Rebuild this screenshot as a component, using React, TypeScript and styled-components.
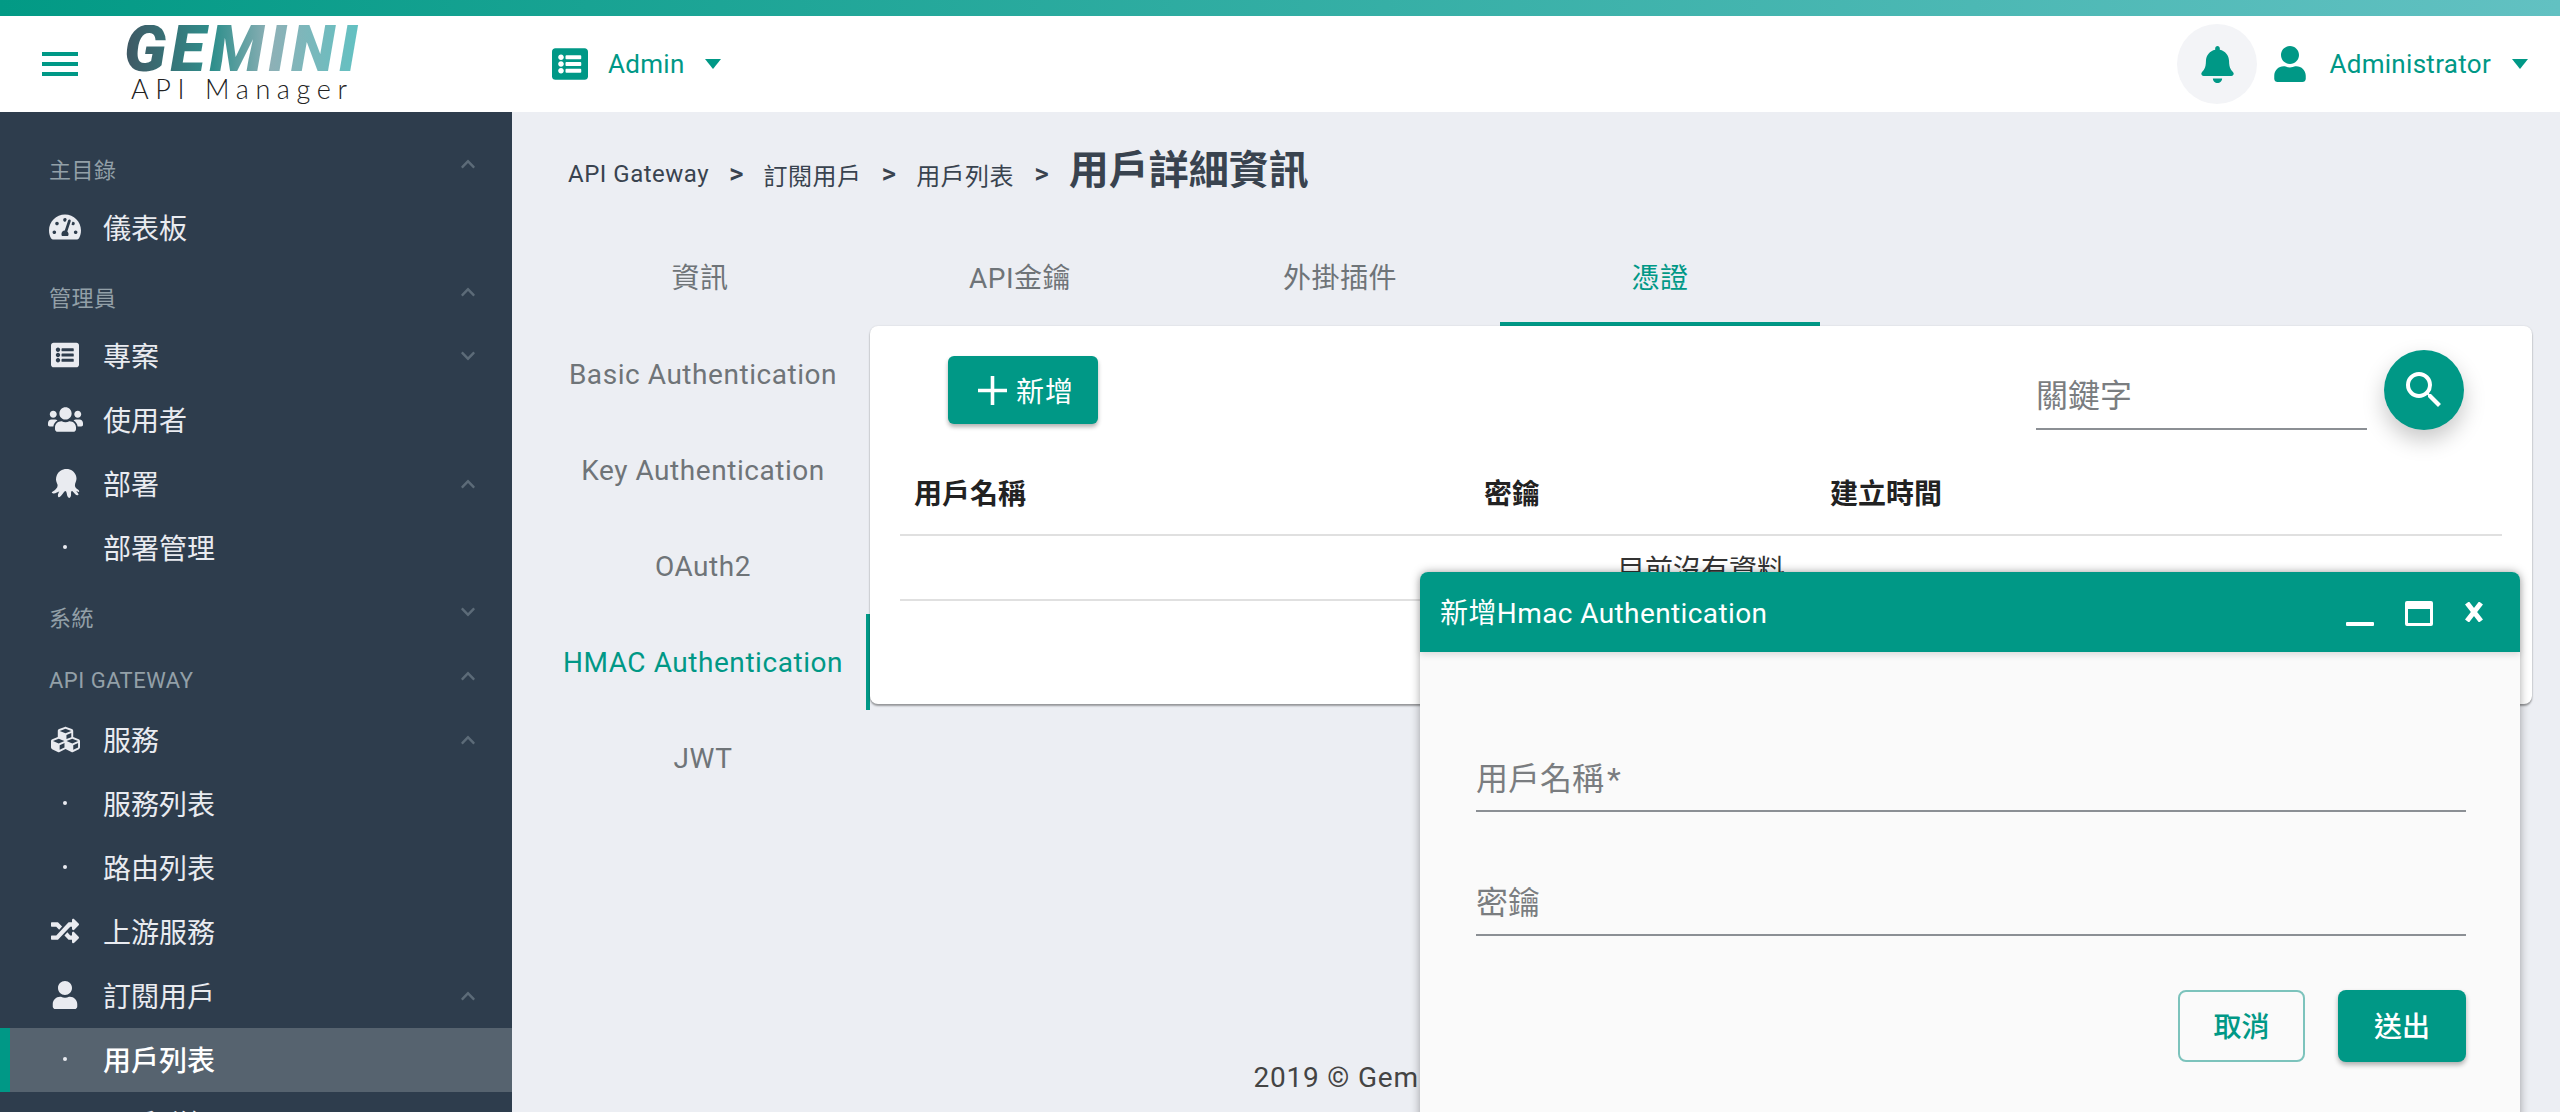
import styled, { createGlobalStyle } from 'styled-components'
import { FaBell, FaChevronDown, FaChevronUp, FaCubes, FaListAlt, FaOctopusDeploy, FaRandom, FaTachometerAlt, FaUser, FaUsers } from 'react-icons/fa'
import { MdSearch } from 'react-icons/md'
import type { ReactNode } from 'react'

const teal = '#009886'

type NavEntry = {
   label: string
   kind: 'section' | 'item' | 'sub'
   icon?: ReactNode
   chevron?: 'up' | 'down'
   active?: boolean
}

const navEntries: NavEntry[] = [
   { label: '主目錄', kind: 'section', chevron: 'up' },
   { label: '儀表板', kind: 'item', icon: <FaTachometerAlt size={32} /> },
   { label: '管理員', kind: 'section', chevron: 'up' },
   { label: '專案', kind: 'item', icon: <FaListAlt size={28} />, chevron: 'down' },
   { label: '使用者', kind: 'item', icon: <FaUsers size={35} /> },
   { label: '部署', kind: 'item', icon: <FaOctopusDeploy size={29} />, chevron: 'up' },
   { label: '部署管理', kind: 'sub' },
   { label: '系統', kind: 'section', chevron: 'down' },
   { label: 'API GATEWAY', kind: 'section', chevron: 'up' },
   { label: '服務', kind: 'item', icon: <FaCubes size={29} />, chevron: 'up' },
   { label: '服務列表', kind: 'sub' },
   { label: '路由列表', kind: 'sub' },
   { label: '上游服務', kind: 'item', icon: <FaRandom size={28} /> },
   { label: '訂閱用戶', kind: 'item', icon: <FaUser size={28} />, chevron: 'up' },
   { label: '用戶列表', kind: 'sub', active: true },
   { label: '用戶群組', kind: 'sub' },
]

const topTabs = ['資訊', 'API金鑰', '外掛插件', '憑證']
const authTabs = ['Basic Authentication', 'Key Authentication', 'OAuth2', 'HMAC Authentication', 'JWT']

export default function App() {
   return (
      <Shell>
         <GlobalStyle />
         <TopStrip />
         <Header>
            <Hamburger>
               <span />
               <span />
               <span />
            </Hamburger>
            <Logo>
               <LogoMain>GEMINI</LogoMain>
               <LogoSub>API Manager</LogoSub>
            </Logo>
            <ProjectMenu>
               <FaListAlt size={36} />
               <MenuLabel>Admin</MenuLabel>
               <Caret />
            </ProjectMenu>
            <HeaderRight>
               <BellButton>
                  <FaBell size={37} />
               </BellButton>
               <FaUser size={36} />
               <MenuLabel>Administrator</MenuLabel>
               <Caret />
            </HeaderRight>
         </Header>
         <Body>
            <Sidebar>
               {navEntries.map((entry) => (
                  <NavRow key={entry.label} $kind={entry.kind} $active={entry.active}>
                     {entry.kind !== 'section' && (
                        <NavIcon>{entry.kind === 'sub' ? <NavDot /> : entry.icon}</NavIcon>
                     )}
                     <NavLabel $kind={entry.kind} $active={entry.active}>{entry.label}</NavLabel>
                     {entry.chevron && (
                        <NavChevron>
                           {entry.chevron === 'up' ? <FaChevronUp size={16} /> : <FaChevronDown size={16} />}
                        </NavChevron>
                     )}
                  </NavRow>
               ))}
            </Sidebar>
            <Main>
               <Breadcrumb>
                  <Crumb>API Gateway</Crumb>
                  <CrumbArrow>&gt;</CrumbArrow>
                  <Crumb>訂閱用戶</Crumb>
                  <CrumbArrow>&gt;</CrumbArrow>
                  <Crumb>用戶列表</Crumb>
                  <CrumbArrow>&gt;</CrumbArrow>
                  <PageTitle>用戶詳細資訊</PageTitle>
               </Breadcrumb>
               <TopTabs>
                  {topTabs.map((tab) => (
                     <TopTab key={tab} $active={tab === '憑證'}>{tab}</TopTab>
                  ))}
               </TopTabs>
               <Content>
                  <AuthTabs>
                     {authTabs.map((tab) => (
                        <AuthTab key={tab} $active={tab === 'HMAC Authentication'}>{tab}</AuthTab>
                     ))}
                  </AuthTabs>
                  <Card>
                     <Toolbar>
                        <AddButton>
                           <svg width="29" height="29" viewBox="0 0 29 29">
                              <path d="M14.5 0v29M0 14.5h29" stroke="#fff" strokeWidth="3.6" fill="none" />
                           </svg>
                           新增
                        </AddButton>
                        <SearchInput placeholder="關鍵字" />
                        <SearchButton>
                           <MdSearch size={48} />
                        </SearchButton>
                     </Toolbar>
                     <DataTable>
                        <thead>
                           <tr>
                              <HeadCell $width={570}>用戶名稱</HeadCell>
                              <HeadCell $width={346}>密鑰</HeadCell>
                              <HeadCell>建立時間</HeadCell>
                           </tr>
                        </thead>
                        <tbody>
                           <tr>
                              <EmptyCell colSpan={3}>目前沒有資料</EmptyCell>
                           </tr>
                        </tbody>
                     </DataTable>
                  </Card>
               </Content>
               <Footer>2019 © Gemini Open Cloud Computing Inc.</Footer>
            </Main>
         </Body>
         <Dialog>
            <DialogHeader>
               <DialogTitle>新增Hmac Authentication</DialogTitle>
               <WindowIcon width="28" height="28" viewBox="0 0 28 28">
                  <rect x="0" y="24" width="28" height="4" rx="1" fill="#fff" />
               </WindowIcon>
               <WindowIcon width="28" height="28" viewBox="0 0 28 28">
                  <path fillRule="evenodd" d="M2 3h24a2 2 0 0 1 2 2v21a2 2 0 0 1-2 2H2a2 2 0 0 1-2-2V5a2 2 0 0 1 2-2zm1 8v14h22V11z" fill="#fff" />
               </WindowIcon>
               <WindowIcon width="20" height="20" viewBox="0 0 20 20">
                  <path d="M3 1l14 18M17 1L3 19" stroke="#fff" strokeWidth="5" fill="none" />
               </WindowIcon>
            </DialogHeader>
            <DialogBody>
               <FormInput placeholder="用戶名稱 *" />
               <FormInput placeholder="密鑰" />
               <DialogActions>
                  <CancelButton>取消</CancelButton>
                  <SubmitButton>送出</SubmitButton>
               </DialogActions>
            </DialogBody>
         </Dialog>
      </Shell>
   )
}

const GlobalStyle = createGlobalStyle`
html, body {
   margin: 0;
   padding: 0;
   height: 100%;
   overflow: hidden;
}
body, input, button {
   font-family: Roboto, "Noto Sans CJK TC", sans-serif;
}
* {
   box-sizing: border-box;
}
`

const Shell = styled.div`
position: relative;
display: flex;
flex-direction: column;
height: 1112px;
overflow: hidden;
background: #eceef3;
`

const TopStrip = styled.div`
height: 16px;
flex: none;
background: linear-gradient(90deg, #029a85, #62c1c2);
`

const Header = styled.header`
height: 96px;
flex: none;
display: flex;
align-items: center;
padding: 0 32px 0 42px;
background: #fff;
color: ${teal};
`

const Hamburger = styled.div`
width: 36px;
display: flex;
flex-direction: column;
gap: 6px;
span {
   height: 4px;
   background: ${teal};
}
`

const Logo = styled.div`
width: 232px;
margin-left: 49px;
display: flex;
flex-direction: column;
`

const LogoMain = styled.div`
font-size: 64px;
line-height: 49px;
font-weight: 900;
font-style: italic;
letter-spacing: 4.2px;
margin-left: -3px;
background: linear-gradient(90deg, #3f5763 0%, #2f8f8c 38%, #8eb0b6 62%, #62c1c2 100%);
-webkit-background-clip: text;
background-clip: text;
color: transparent;
`

const LogoSub = styled.div`
font-family: Lato, sans-serif;
font-size: 27px;
line-height: 30px;
font-weight: 300;
letter-spacing: 6.6px;
padding-left: 4px;
color: #222;
white-space: nowrap;
`

const ProjectMenu = styled.div`
display: flex;
align-items: center;
margin-left: 193px;
gap: 20px;
`

const MenuLabel = styled.span`
font-size: 26px;
letter-spacing: 0.3px;
`

const Caret = styled.span`
width: 0;
height: 0;
border-left: 8px solid transparent;
border-right: 8px solid transparent;
border-top: 10px solid ${teal};
`

const HeaderRight = styled.div`
display: flex;
align-items: center;
margin-left: auto;
gap: 21px;
`

const BellButton = styled.div`
width: 80px;
height: 80px;
border-radius: 50%;
display: flex;
align-items: center;
justify-content: center;
background: #f3f4f7;
margin-right: -6px;
`

const Body = styled.div`
flex: 1;
display: flex;
min-height: 0;
`

const Sidebar = styled.nav`
width: 512px;
flex: none;
padding-top: 20px;
background: #2e3d4d;
overflow: hidden;
`

const NavRow = styled.div<{ $kind: NavEntry['kind']; $active?: boolean }>`
position: relative;
height: 64px;
display: flex;
align-items: center;
padding: ${(p) => (p.$kind === 'section' ? '8px 36px 0 49px' : '0 36px 2px 40px')};
background: ${(p) => (p.$active ? '#56636f' : 'transparent')};
box-shadow: ${(p) => (p.$active ? `inset 10px 0 0 ${teal}` : 'none')};
`

const NavIcon = styled.span`
width: 50px;
margin-right: 13px;
display: flex;
justify-content: center;
color: #e9ebf0;
`

const NavDot = styled.span`
width: 4px;
height: 4px;
border-radius: 50%;
background: #e9ebf0;
`

const NavLabel = styled.span<{ $kind: NavEntry['kind']; $active?: boolean }>`
font-size: ${(p) => (p.$kind === 'section' ? '22px' : '28px')};
font-weight: ${(p) => (p.$active ? 500 : 400)};
color: ${(p) => (p.$kind === 'section' ? '#93a0a8' : p.$active ? '#fff' : '#e9ebf0')};
letter-spacing: ${(p) => (p.$kind === 'section' ? '0.5px' : '0')};
`

const NavChevron = styled.span`
position: absolute;
right: 36px;
top: 24px;
display: flex;
color: #5c6b78;
`

const Main = styled.main`
flex: 1;
min-width: 0;
display: flex;
flex-direction: column;
padding: 0 28px;
`

const Breadcrumb = styled.div`
height: 118px;
flex: none;
display: flex;
align-items: center;
padding-left: 28px;
color: #39434f;
`

const Crumb = styled.span`
font-size: 24px;
letter-spacing: 0.5px;
padding-top: 6px;
`

const CrumbArrow = styled.span`
font-size: 28px;
font-weight: 500;
margin: 0 20px;
padding-top: 4px;
`

const PageTitle = styled.h1`
margin: 0;
padding-bottom: 8px;
font-size: 40px;
font-weight: 700;
`

const TopTabs = styled.div`
display: flex;
flex: none;
height: 96px;
`

const TopTab = styled.div<{ $active?: boolean }>`
width: 320px;
display: flex;
align-items: center;
justify-content: center;
font-size: 28px;
letter-spacing: 0.5px;
color: ${(p) => (p.$active ? teal : '#6f7478')};
border-bottom: 4px solid ${(p) => (p.$active ? teal : 'transparent')};
`

const Content = styled.div`
display: flex;
align-items: flex-start;
flex: none;
`

const AuthTabs = styled.div`
width: 330px;
flex: none;
display: flex;
flex-direction: column;
`

const AuthTab = styled.div<{ $active?: boolean }>`
height: 96px;
display: flex;
align-items: center;
justify-content: center;
font-size: 28px;
letter-spacing: 0.55px;
white-space: nowrap;
color: ${(p) => (p.$active ? teal : '#6f7478')};
border-right: 4px solid ${(p) => (p.$active ? teal : 'transparent')};
`

const Card = styled.section`
flex: 1;
height: 378px;
background: #fff;
border-radius: 8px;
box-shadow: 0 2px 2px rgba(0, 0, 0, 0.35), 0 0 2px rgba(0, 0, 0, 0.12);
overflow: hidden;
`

const Toolbar = styled.div`
display: flex;
align-items: flex-start;
padding: 24px 68px 0 78px;
`

const AddButton = styled.button`
width: 150px;
height: 68px;
margin-top: 6px;
display: flex;
align-items: center;
justify-content: center;
gap: 9px;
padding: 0 0 0 6px;
border: none;
border-radius: 6px;
background: ${teal};
color: #fff;
font-size: 28px;
letter-spacing: 1px;
box-shadow: 0 3px 4px rgba(0, 0, 0, 0.3);
`

const SearchInput = styled.input`
width: 331px;
height: 64px;
margin: 16px 17px 0 auto;
padding: 0 0 2px 0;
border: none;
border-bottom: 2px solid #8b8f94;
background: transparent;
font-size: 32px;
outline: none;
&::placeholder {
   color: #7a7d80;
   opacity: 1;
}
`

const SearchButton = styled.button`
width: 80px;
height: 80px;
flex: none;
display: flex;
align-items: center;
justify-content: center;
padding: 0;
border: none;
border-radius: 50%;
background: ${teal};
color: #fff;
box-shadow: 0 10px 22px rgba(0, 0, 0, 0.22);
`

const DataTable = styled.table`
width: 1602px;
margin: 23px 30px 0;
border-collapse: collapse;
table-layout: fixed;
`

const HeadCell = styled.th<{ $width?: number }>`
width: ${(p) => (p.$width ? `${p.$width}px` : 'auto')};
height: 82px;
padding: 0 14px 4px;
text-align: left;
font-size: 28px;
font-weight: 700;
color: #222;
border-bottom: 2px solid #e0e0e0;
`

const EmptyCell = styled.td`
height: 65px;
text-align: center;
font-size: 28px;
color: #333;
border-bottom: 2px solid #e0e0e0;
`

const Footer = styled.footer`
margin-top: auto;
height: 70px;
flex: none;
display: flex;
align-items: center;
justify-content: center;
font-size: 28px;
letter-spacing: 0.8px;
color: #444;
`

const Dialog = styled.div`
position: absolute;
top: 572px;
left: 1420px;
width: 1100px;
height: 640px;
border-radius: 8px 8px 0 0;
background: #fafafa;
box-shadow: 0 0 10px rgba(0, 0, 0, 0.35);
`

const DialogHeader = styled.div`
height: 80px;
display: flex;
align-items: center;
padding: 0 36px 0 20px;
border-radius: 8px 8px 0 0;
background: ${teal};
color: #fff;
box-shadow: 0 3px 6px rgba(0, 0, 0, 0.12);
`

const DialogTitle = styled.span`
font-size: 28px;
letter-spacing: 0.4px;
padding-bottom: 3px;
margin-right: auto;
`

const WindowIcon = styled.svg`
flex: none;
margin-left: 31px;
`

const DialogBody = styled.div`
display: flex;
flex-direction: column;
gap: 60px;
padding: 96px 54px 0 56px;
`

const FormInput = styled.input`
height: 64px;
padding: 0;
border: none;
border-bottom: 2px solid #8b8f94;
background: transparent;
font-size: 32px;
word-spacing: -5px;
outline: none;
&::placeholder {
   color: #7a7d80;
   opacity: 1;
}
`

const DialogActions = styled.div`
display: flex;
justify-content: flex-end;
gap: 33px;
margin-top: -6px;
`

const CancelButton = styled.button`
width: 127px;
height: 72px;
padding: 0 0 3px;
border: 2px solid #7cc3bc;
border-radius: 8px;
background: transparent;
color: ${teal};
font-size: 28px;
font-weight: 500;
`

const SubmitButton = styled.button`
width: 128px;
height: 72px;
padding: 0 0 3px;
border: none;
border-radius: 8px;
background: ${teal};
color: #fff;
font-size: 28px;
font-weight: 500;
box-shadow: 0 3px 5px rgba(0, 0, 0, 0.3);
`
